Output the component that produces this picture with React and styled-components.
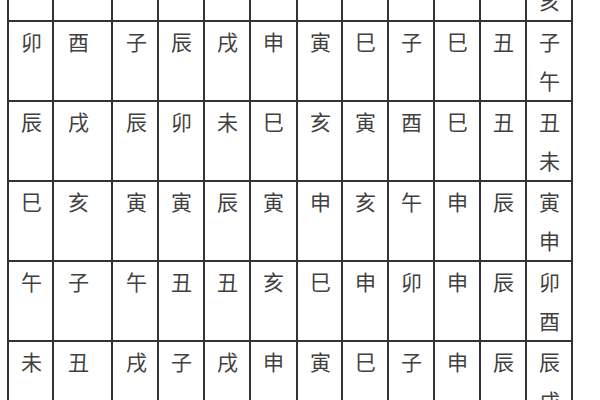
import React from "react";
import styled, { createGlobalStyle } from "styled-components";

const Global = createGlobalStyle`
  html, body {
    margin: 0;
    padding: 0;
    background: #ffffff;
    overflow: hidden;
    width: 600px;
    height: 400px;
  }
`;

const Frame = styled.div`
  width: 600px;
  height: 400px;
  overflow: hidden;
  background: #ffffff;
`;

const Table = styled.table`
  border-collapse: collapse;
  table-layout: fixed;
  margin-top: -60px;
  margin-left: 7px;
  font-family: "Noto Sans CJK SC", "Noto Sans", sans-serif;
  font-size: 21px;
  color: #404040;
`;

const Cell = styled.td`
  border: 2px solid #333333;
  padding: 0 0 0 ${(p) => p.$pad}px;
  line-height: 39px;
  vertical-align: top;
  white-space: pre-line;
  overflow: hidden;
`;

const widths = [45, 59, 46, 46, 46, 47, 45, 46, 46, 46, 46, 46];
const pads = [12, 14, 13, 12, 12, 12, 12, 12, 12, 12, 12, 12];

const rows = [
  ["", "", "", "", "", "", "", "", "", "", "", "巳\n亥"],
  ["卯", "酉", "子", "辰", "戌", "申", "寅", "巳", "子", "巳", "丑", "子\n午"],
  ["辰", "戌", "辰", "卯", "未", "巳", "亥", "寅", "酉", "巳", "丑", "丑\n未"],
  ["巳", "亥", "寅", "寅", "辰", "寅", "申", "亥", "午", "申", "辰", "寅\n申"],
  ["午", "子", "午", "丑", "丑", "亥", "巳", "申", "卯", "申", "辰", "卯\n酉"],
  ["未", "丑", "戌", "子", "戌", "申", "寅", "巳", "子", "申", "辰", "辰\n戌"],
];

export default function App() {
  return (
    <Frame>
      <Global />
      <Table>
        <colgroup>
          {widths.map((w, i) => (
            <col key={i} style={{ width: w }} />
          ))}
        </colgroup>
        <tbody>
          {rows.map((r, ri) => (
            <tr key={ri}>
              {r.map((c, ci) => (
                <Cell key={ci} $pad={pads[ci]}>
                  {c}
                </Cell>
              ))}
            </tr>
          ))}
        </tbody>
      </Table>
    </Frame>
  );
}
